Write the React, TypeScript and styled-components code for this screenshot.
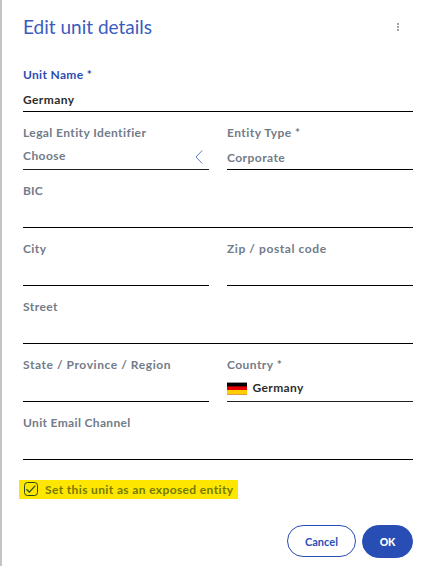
import React from 'react';
import styled, { createGlobalStyle } from 'styled-components';

const GlobalStyle = createGlobalStyle`
  * { box-sizing: border-box; }
  body { margin: 0; background: #fff; overflow: hidden; }
  button { font: inherit; margin: 0; padding: 0; }
`;

const Panel = styled.main`
  width: 424px;
  height: 566px;
  border-left: 2px solid #c4c4c4;
  padding: 0 11px 0 21px;
  background: #fff;
  font-family: Lato, sans-serif;
  font-size: 12px;
  font-weight: 700;
`;

const Header = styled.header`
  display: flex;
  align-items: center;
  justify-content: space-between;
  height: 54px;
  padding-right: 14px;
`;

const Text = styled.span<{ $track?: number }>`
  letter-spacing: ${p => p.$track ?? 0.4}px;
  white-space: nowrap;
`;

const Title = styled.h1`
  margin: 0;
  font-size: 19px;
  line-height: 24px;
  font-weight: 400;
  letter-spacing: 0;
  color: #3a5bbd;
`;

const MoreButton = styled.button`
  display: grid;
  gap: 1px;
  border: 0;
  background: none;
`;

const Dot = styled.i`
  width: 2px;
  height: 2px;
  background: #a0a3aa;
`;

const Form = styled.section`
  display: grid;
  grid-template-columns: 186px 186px;
  column-gap: 18px;
  grid-auto-rows: 58px;
`;

const Field = styled.div<{ $wide?: boolean; $soft?: boolean }>`
  grid-column: ${p => (p.$wide ? 'span 2' : 'auto')};
  padding-top: 13px;
  border-bottom: 1px solid ${p => (p.$soft ? '#222' : '#000')};
`;

const Label = styled.div<{ $active?: boolean }>`
  height: 16px;
  line-height: 16px;
  color: ${p => (p.$active ? '#2b4eb5' : '#727b88')};
`;

const Value = styled.div<{ $top?: number; $muted?: boolean }>`
  display: flex;
  align-items: center;
  height: 16px;
  line-height: 16px;
  margin-top: ${p => p.$top ?? 9}px;
  color: ${p => (p.$muted ? '#727b88' : '#2d2d2d')};
`;

const Chevron = styled.svg`
  margin: 2px 6px 0 auto;
`;

const Flag = styled.svg`
  margin: 1px 5.5px 0 0;
`;

const CheckRow = styled.label`
  display: flex;
  align-items: center;
  width: 219px;
  height: 19px;
  margin: 20px 0 0 -4px;
  padding: 0 0 1px 5px;
  background: #ffe600;
  color: #737b00;
`;

const CheckBox = styled.svg`
  margin-right: 7px;
`;

const Actions = styled.footer`
  display: flex;
  justify-content: flex-end;
  gap: 6px;
  margin-top: 26px;
`;

const Button = styled.button<{ $primary?: boolean }>`
  width: ${p => (p.$primary ? 51 : 69)}px;
  height: ${p => (p.$primary ? 33 : 32)}px;
  border: 1px solid #284db5;
  border-radius: 17px;
  background: ${p => (p.$primary ? '#284db5' : '#fff')};
  color: ${p => (p.$primary ? '#fff' : '#284db5')};
  font-size: ${p => (p.$primary ? 10.5 : 11)}px;
  font-weight: ${p => (p.$primary ? 900 : 700)};
`;

export default function App() {
  return (
    <>
      <GlobalStyle />
      <Panel>
        <Header>
          <Title>Edit unit details</Title>
          <MoreButton aria-label="More options"><Dot /><Dot /><Dot /></MoreButton>
        </Header>
        <Form>
          <Field $wide>
            <Label $active><Text $track={0.32}>Unit Name *</Text></Label>
            <Value><Text>Germany</Text></Value>
          </Field>
          <Field $soft>
            <Label><Text>Legal Entity Identifier</Text></Label>
            <Value $top={7} $muted>
              <Text $track={0.45}>Choose</Text>
              <Chevron width="8" height="14" viewBox="0 0 8 14" fill="none" stroke="#5e7ccb">
                <path d="M7.2 .5 1 7l6.2 6.5" />
              </Chevron>
            </Value>
          </Field>
          <Field>
            <Label><Text $track={0.45}>Entity Type *</Text></Label>
            <Value $muted><Text $track={0.45}>Corporate</Text></Value>
          </Field>
          <Field $wide><Label><Text $track={0.1}>BIC</Text></Label></Field>
          <Field><Label><Text>City</Text></Label></Field>
          <Field><Label><Text $track={0.58}>Zip / postal code</Text></Label></Field>
          <Field $wide><Label><Text $track={0.45}>Street</Text></Label></Field>
          <Field><Label><Text $track={0.57}>State / Province / Region</Text></Label></Field>
          <Field $soft>
            <Label><Text $track={0.45}>Country *</Text></Label>
            <Value $top={7}>
              <Flag width="20" height="13" viewBox="0 0 20 13" shapeRendering="crispEdges">
                <path fill="#000" d="M0 0h20v5H0z" />
                <path fill="#999" d="M0 0h20v1H0z" />
                <path fill="#e60000" d="M0 5h20v3H0z" />
                <path fill="#8a0000" d="M0 4h20v1H0z" />
                <path fill="#ffce00" d="M0 8h20v4H0z" />
                <path fill="#e79a45" d="M0 12h20v1H0z" />
              </Flag>
              <Text $track={0.38}>Germany</Text>
            </Value>
          </Field>
          <Field $wide><Label><Text $track={0.34}>Unit Email Channel</Text></Label></Field>
        </Form>
        <CheckRow>
          <CheckBox width="14" height="14" viewBox="0 0 14 14" fill="none" stroke="#254a17">
            <rect x=".5" y=".5" width="13" height="13" rx="3" />
            <path d="m2.5 7.3 2.8 2.8 6-6.5" strokeWidth="1.3" />
          </CheckBox>
          <Text $track={0.37}>Set this unit as an exposed entity</Text>
        </CheckRow>
        <Actions>
          <Button><Text $track={0.05}>Cancel</Text></Button>
          <Button $primary><Text $track={-0.2}>OK</Text></Button>
        </Actions>
      </Panel>
    </>
  );
}
